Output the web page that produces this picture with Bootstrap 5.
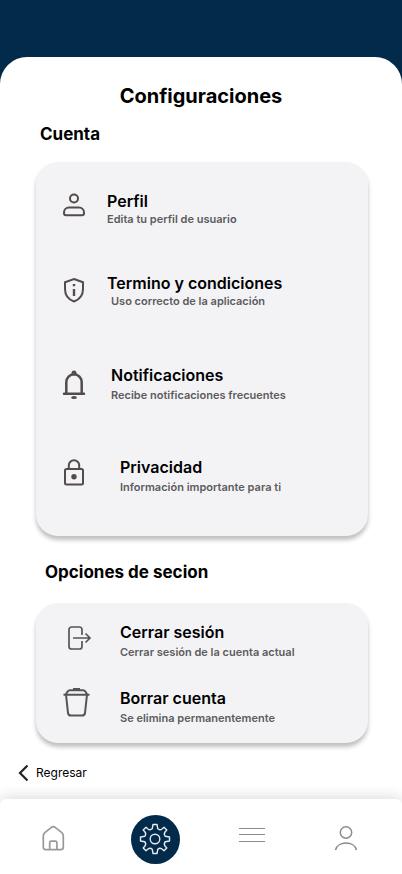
<!DOCTYPE html>
<html lang="es">
<head>
<meta charset="utf-8">
<meta name="viewport" content="width=device-width, initial-scale=1">
<title>Configuraciones</title>
<link href="https://cdn.jsdelivr.net/npm/bootstrap@5.3.0/dist/css/bootstrap.min.css" rel="stylesheet">
<style>
  body { font-family: Inter, "Liberation Sans", sans-serif; background: #022a4a; color: #000; }
  .sheet { margin-top: 57px; padding-top: 26px; background: #fff; border-radius: 27px 27px 0 0; }
  .page-title { font-size: 20px; line-height: 26px; font-weight: 700; }
  .group-title { font-size: 17px; line-height: 22px; font-weight: 700; }
  .title-account { margin: 14px 40px 17px; }
  .title-session { margin: 25px 45px 20px; }
  .panel { margin: 0 34px 0 36px; padding: 0 24px; background: #f3f3f6; border-radius: 22px; box-shadow: 0 4px 4px rgba(0,0,0,.25); }
  .panel-account { padding-top: 29px; padding-bottom: 39px; }
  .panel-session { padding-top: 19px; padding-bottom: 15px; }
  .option { color: #000; }
  .option-icon { width: 32px; height: 36px; flex: none; fill: none; stroke: #534b4c; stroke-width: 2; }
  .panel-session .option-icon { stroke: #565456; }
  .option-title { font-size: 16px; line-height: 20px; font-weight: 600; }
  .option-note { font-size: 11px; line-height: 20px; font-weight: 600; color: #5c5b5d; }
  .tight .option-note { line-height: 16px; }
  .gap-a { gap: 15px; } .gap-b { gap: 19px; } .gap-c { gap: 28px; }
  .space-s { margin-bottom: 26px; } .space-m { margin-bottom: 46px; } .space-l { margin-bottom: 52px; } .space-xl { margin-bottom: 56px; }
  .back { font-size: 12px; line-height: 20px; color: #000; }
  .tabs { display: grid; grid-template-columns: 106fr 98fr 96fr 92fr; padding: 16px 10px 10px 0; background: #fff; border-radius: 6px 6px 0 0; box-shadow: 0 -2px 14px rgba(0,0,0,.14); }
  .tab { width: 49px; height: 49px; fill: none; stroke: #8b8b8b; }
  .tab svg { display: block; }
  .tab-on { background: #022a4a; stroke: #e4eaf0; }
</style>
</head>
<body>
<div class="min-vh-100 d-flex flex-column">
  <main class="sheet flex-grow-1 d-flex flex-column">
    <h1 class="page-title text-center mb-0">Configuraciones</h1>
    <h2 class="group-title title-account">Cuenta</h2>
    <section class="panel panel-account" aria-label="Cuenta">
      <a href="#" class="option tight gap-a space-m d-flex text-decoration-none">
        <svg class="option-icon" viewBox="0 0 32 36" aria-hidden="true"><circle cx="14" cy="7.500" r="4"/><path d="M9 16.500h10a5 5 0 0 1 5 5v.7a2 2 0 0 1-2 2H6a2 2 0 0 1-2-2v-.7a5 5 0 0 1 5-5z"/></svg>
        <span><span class="option-title d-block">Perfil</span><span class="option-note d-block">Edita tu perfil de usuario</span></span>
      </a>
      <a href="#" class="option tight gap-a space-xl d-flex text-decoration-none">
        <svg class="option-icon" viewBox="0 0 32 36" aria-hidden="true"><path d="M14 6 L23 9.300 V16 C23 22 19.500 26.500 14 28.500 C8.500 26.500 5 22 5 16 V9.300 Z"/><path d="M14 16v7M14 11v2.300" stroke-width="2.400"/></svg>
        <span><span class="option-title d-block">Termino y condiciones</span><span class="option-note d-block ps-1">Uso correcto de la aplicación</span></span>
      </a>
      <a href="#" class="option gap-b space-l d-flex text-decoration-none">
        <svg class="option-icon" viewBox="0 0 32 36" aria-hidden="true"><path d="M4 28.700H24M6.300 28.700V17.300a7.700 8 0 0 1 15.400 0V28.700" stroke-width="2.500" stroke-linecap="round"/><circle cx="14" cy="8" r="2.500" fill="#534b4c" stroke="none"/><ellipse cx="14" cy="32.600" rx="2.900" ry="1.500" fill="#534b4c" stroke="none"/></svg>
        <span><span class="option-title d-block">Notificaciones</span><span class="option-note d-block">Recibe notificaciones frecuentes</span></span>
      </a>
      <a href="#" class="option gap-c d-flex text-decoration-none">
        <svg class="option-icon" viewBox="0 0 32 36" aria-hidden="true"><rect x="5" y="12" width="18" height="15.500" rx="1.500"/><path d="M8.800 12V8.500a5.200 5.200 0 0 1 10.400 0v3.500"/><circle cx="14" cy="19.700" r="2.700" fill="#534b4c" stroke="none"/></svg>
        <span><span class="option-title d-block">Privacidad</span><span class="option-note d-block">Información importante para ti</span></span>
      </a>
    </section>
    <h2 class="group-title title-session">Opciones de secion</h2>
    <section class="panel panel-session" aria-label="Opciones de sesión">
      <a href="#" class="option gap-c space-s d-flex text-decoration-none">
        <svg class="option-icon" viewBox="0 0 32 36" aria-hidden="true"><path d="M22 13V7.500a2.500 2.500 0 0 0-2.500-2.500h-8a2.500 2.500 0 0 0-2.500 2.500v17a2.500 2.500 0 0 0 2.500 2.500h8a2.500 2.500 0 0 0 2.500-2.500V19M13 16h17M25.500 11.500l4.500 4.500-4.500 4.500" stroke-width="1.700"/></svg>
        <span><span class="option-title d-block">Cerrar sesión</span><span class="option-note d-block">Cerrar sesión de la cuenta actual</span></span>
      </a>
      <a href="#" class="option gap-c d-flex text-decoration-none">
        <svg class="option-icon" viewBox="0 0 32 36" aria-hidden="true"><path d="M6 6.700l2 18.300a3 3 0 0 0 3 2.500h11a3 3 0 0 0 3-2.500l2-18.300M3.500 6.700h26M5.500 6.700l2-3q1-1.400 2.500-1.400h13q1.500 0 2.500 1.400l2 3M13 1h7"/></svg>
        <span><span class="option-title d-block">Borrar cuenta</span><span class="option-note d-block">Se elimina permanentemente</span></span>
      </a>
    </section>
    <a href="#" class="back d-flex align-items-center align-self-start gap-2 ms-3 mt-auto mb-3 text-decoration-none">
      <svg width="12" height="18" viewBox="0 0 12 18" fill="none" stroke="#222" stroke-width="2.200" aria-hidden="true"><path d="M11.500 1.500L4 9l7.500 7.500"/></svg>
      Regresar
    </a>
    <nav class="tabs" aria-label="Principal">
      <button type="button" class="tab btn border-0 p-0 rounded-circle mx-auto" aria-label="Inicio">
        <svg width="49" height="49" viewBox="0 0 49 49" stroke="#999" stroke-width="1.700"><path d="M14.300 21Q14.300 19 15.800 17.700l6.300-5a3.200 3.200 0 0 1 4.400 0l6.300 5q1.500 1.300 1.500 3.300V32a2.700 2.700 0 0 1-2.700 2.700H17a2.700 2.700 0 0 1-2.700-2.700zM20.700 34.700v-7q0-1.500 1.500-1.500h4.200q1.500 0 1.500 1.500v7"/></svg>
      </button>
      <button type="button" class="tab tab-on btn border-0 p-0 rounded-circle mx-auto" aria-label="Configuraciones">
        <svg width="49" height="49" viewBox="0 0 49 49" stroke-width="1.400" stroke-linejoin="round"><circle cx="24" cy="24" r="4.800"/><path d="M22 9.500h4l.8 4.300q2 1.700 4.200.2l2-1.800 2.800 2.800-1.800 2q-1.500 2.200.2 4.200l4.300.8v4l-4.300.8q-1.700 2-.2 4.200l1.800 2-2.800 2.800-2-1.800q-2.200-1.500-4.200.2l-.8 4.300h-4l-.8-4.300q-2-1.700-4.200-.2l-2 1.800-2.800-2.800 1.800-2q1.500-2.200-.2-4.200l-4.300-.8v-4l4.300-.8q1.700-2 .2-4.200l-1.800-2 2.800-2.800 2 1.800q2.200 1.500 4.200-.2z"/></svg>
      </button>
      <button type="button" class="tab btn border-0 p-0 rounded-circle mx-auto" aria-label="Menú">
        <svg width="49" height="49" viewBox="0 0 49 49" stroke-width="1"><path d="M11 13.500h26M11 19.500h26M11 26.500h26"/></svg>
      </button>
      <button type="button" class="tab btn border-0 p-0 rounded-circle mx-auto" aria-label="Perfil">
        <svg width="49" height="49" viewBox="0 0 49 49" stroke-width="1.500"><circle cx="24" cy="17.500" r="5.700"/><path d="M13.500 35c1-4.500 5.500-7 10.500-7s9.500 2.500 10.500 7"/></svg>
      </button>
    </nav>
  </main>
</div>
<script src="https://cdn.jsdelivr.net/npm/bootstrap@5.3.0/dist/js/bootstrap.bundle.min.js"></script>
</body>
</html>
